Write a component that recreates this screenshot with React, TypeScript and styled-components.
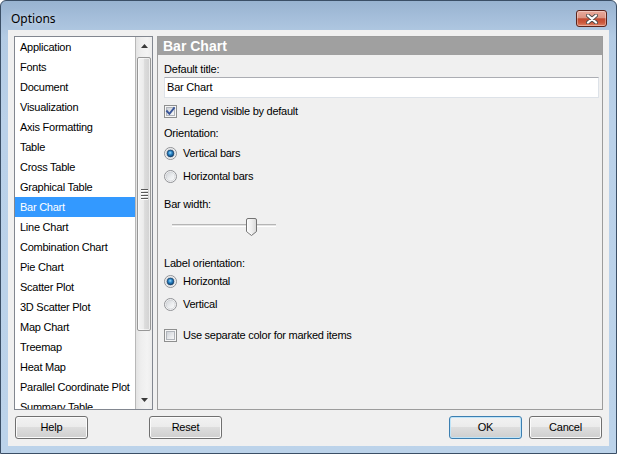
import React, { useId } from "react";
import styled, { createGlobalStyle } from "styled-components";

const Global = createGlobalStyle`
  html, body { margin: 0; padding: 0; width: 617px; height: 454px; overflow: hidden; background: #ffffff; }
  #root { width: 617px; height: 454px; }
  * { box-sizing: border-box; }
`;

const FONT = `"Liberation Sans", Arial, sans-serif`;

const Window = styled.div`
  width: 617px;
  height: 454px;
  border: 1px solid #3b4f66;
  border-radius: 6px 6px 0 0;
  background: linear-gradient(to bottom, #98b3d0 0px, #a6bfdb 18px, #b3cbe4 36px, #bad1e9 120px, #bcd3ea 100%);
  display: flex;
  flex-direction: column;
  padding: 0 7px 7px 7px;
  font-family: ${FONT};
`;

const TitleBar = styled.div`
  height: 29px;
  flex-shrink: 0;
  display: flex;
  align-items: flex-start;
  padding: 0 2px 0 3px;
`;

const TitleText = styled.div`
  margin-top: 10px;
  font-family: "Noto Sans", "Open Sans", sans-serif;
  font-size: 12px;
  line-height: 16px;
  color: #000;
  text-shadow: 0 0 6px rgba(255, 255, 255, 0.7);
  flex: 1;
`;

const CloseBtn = styled.div`
  width: 31px;
  height: 17px;
  margin-top: 9px;
  border: 1px solid #5c241b;
  border-radius: 3px;
  background: linear-gradient(to bottom, #eaaa9c 0%, #dc9482 45%, #c24a31 52%, #cc5a3d 78%, #e0856a 100%);
  box-shadow: inset 0 0 0 1px rgba(255, 255, 255, 0.35);
  display: flex;
  align-items: center;
  justify-content: center;
`;

const Client = styled.div`
  flex: 1;
  background: #f0f0f0;
  display: flex;
  flex-direction: column;
  padding: 6px 6px 7px 6px;
`;

const MainRow = styled.div`
  display: flex;
  gap: 4px;
  height: 374px;
`;

const ListBox = styled.div`
  width: 139px;
  border: 1px solid #828790;
  background: #fff;
  display: flex;
  overflow: hidden;
`;

const ItemsCol = styled.div`
  width: 120px;
  display: flex;
  flex-direction: column;
  overflow: hidden;
`;

const Item = styled.div<{ $selected?: boolean }>`
  height: 20px;
  flex-shrink: 0;
  padding-left: 5px;
  line-height: 20px;
  font-size: 11px;
  letter-spacing: -0.25px;
  white-space: nowrap;
  color: ${(p) => (p.$selected ? "#ffffff" : "#000000")};
  background: ${(p) => (p.$selected ? "#3399ff" : "transparent")};
`;

const ScrollBar = styled.div`
  width: 17px;
  border-left: 1px solid #b8b8b8;
  display: flex;
  flex-direction: column;
  background: linear-gradient(to right, #e3e3e3 0%, #eeeeee 30%, #f3f3f3 70%, #ececec 100%);
`;

const ArrowBtn = styled.div`
  height: 18px;
  flex-shrink: 0;
  display: flex;
  align-items: center;
  justify-content: center;
  padding-left: 1px;
`;

const Thumb = styled.div`
  margin: 2px 0 0 1px;
  width: 14px;
  height: 274px;
  flex-shrink: 0;
  border: 1px solid #979797;
  border-radius: 2px;
  background: linear-gradient(to right, #f4f4f4 0%, #ececec 45%, #dcdcdc 55%, #d2d2d2 100%);
  box-shadow: inset 0 0 0 1px rgba(255, 255, 255, 0.6);
  display: flex;
  align-items: center;
  justify-content: center;
`;

const Grip = styled.div`
  width: 7px;
  display: flex;
  flex-direction: column;
  gap: 1px;
`;

const GripLine = styled.div`
  height: 1px;
  background: #5a5a5a;
  box-shadow: 0 1px 0 #ffffff;
  margin-bottom: 1px;
`;

const TrackFill = styled.div`
  flex: 1;
`;

const Panel = styled.div`
  flex: 1;
  border: 1px solid #9c9c9c;
  display: flex;
  flex-direction: column;
`;

const PanelHeader = styled.div`
  height: 18px;
  background: #a0a0a0;
  color: #ffffff;
  font-weight: bold;
  font-size: 14px;
  line-height: 18px;
  padding-left: 5px;
`;

const PanelBody = styled.div`
  padding: 0 3px 0 6px;
  display: flex;
  flex-direction: column;
`;

const Label = styled.div<{ $mt: number }>`
  margin-top: ${(p) => p.$mt}px;
  height: 16px;
  line-height: 16px;
  font-size: 11px;
  letter-spacing: -0.2px;
  color: #000;
`;

const TextBox = styled.div`
  height: 21px;
  border: 1px solid #dde2e8;
  border-top-color: #abadb3;
  background: #fff;
  font-size: 11px;
  letter-spacing: -0.2px;
  line-height: 19px;
  padding-left: 2px;
  color: #000;
`;

const OptionRow = styled.div<{ $mt: number }>`
  margin-top: ${(p) => p.$mt}px;
  height: 16px;
  display: flex;
  align-items: center;
  gap: 6px;
  font-size: 11px;
  letter-spacing: -0.25px;
  color: #000;
`;

const CheckBoxBox = styled.span`
  width: 13px;
  height: 13px;
  flex-shrink: 0;
  position: relative;
  border: 1px solid #8e8f8f;
  background: #f6f6f6;
  &::before {
    content: "";
    position: absolute;
    inset: 1px;
    border: 1px solid #b0b4ba;
    background: linear-gradient(135deg, #cdd1d7 0%, #e4e6e9 50%, #f7f7f7 100%);
  }
`;

const CheckMark = styled.svg`
  position: absolute;
  left: 0;
  top: 0;
`;

const RadioSvg = styled.svg`
  flex-shrink: 0;
`;

const SliderBox = styled.div`
  height: 30px;
  width: 112px;
  padding: 12px 0 0 8px;
`;

const SliderTrack = styled.div`
  position: relative;
  width: 104px;
  height: 3px;
  border-top: 1px solid #b5b5b5;
  border-bottom: 1px solid #ffffff;
  background: #e4e4e4;
`;

const SliderThumb = styled.svg`
  position: absolute;
  top: -7px;
`;

const ButtonRow = styled.div`
  display: flex;
  margin-top: 6px;
  height: 23px;
  padding: 0 1px;
`;

const Spacer = styled.div`
  flex: 1;
`;

const Button = styled.button<{ $default?: boolean; $ml?: number }>`
  width: 73px;
  height: 23px;
  margin-left: ${(p) => p.$ml ?? 0}px;
  padding: 0 0 2px 0;
  font-family: ${FONT};
  font-size: 11px;
  letter-spacing: -0.2px;
  color: #000;
  border: 1px solid ${(p) => (p.$default ? "#3c7fb1" : "#707070")};
  border-radius: 3px;
  background: linear-gradient(to bottom, #f2f2f2 0%, #ebebeb 50%, #dddddd 50%, #cfcfcf 100%);
  box-shadow: inset 0 0 0 1px ${(p) => (p.$default ? "#bfe4f8" : "#fbfbfb")};
`;

const items = [
  "Application",
  "Fonts",
  "Document",
  "Visualization",
  "Axis Formatting",
  "Table",
  "Cross Table",
  "Graphical Table",
  "Bar Chart",
  "Line Chart",
  "Combination Chart",
  "Pie Chart",
  "Scatter Plot",
  "3D Scatter Plot",
  "Map Chart",
  "Treemap",
  "Heat Map",
  "Parallel Coordinate Plot",
  "Summary Table",
];

function CheckBox({ checked, label, mt }: { checked?: boolean; label: string; mt: number }) {
  return (
    <OptionRow $mt={mt}>
      <CheckBoxBox>
        {checked && (
          <CheckMark width="11" height="11" viewBox="0 0 11 11">
            <path d="M2 5.2 L4.4 7.8 L9 2.2" fill="none" stroke="#3a5699" strokeWidth="1.9" strokeLinecap="square" />
          </CheckMark>
        )}
      </CheckBoxBox>
      <span>{label}</span>
    </OptionRow>
  );
}

function Radio({ checked, label, mt }: { checked?: boolean; label: string; mt: number }) {
  const id = useId().replace(/:/g, "");
  return (
    <OptionRow $mt={mt}>
      <RadioSvg width="13" height="13" viewBox="0 0 13 13">
        <defs>
          <linearGradient id={`bg${id}`} x1="0" y1="0" x2="1" y2="1">
            <stop offset="0" stopColor="#cfd2d6" />
            <stop offset="0.55" stopColor="#eceef0" />
            <stop offset="1" stopColor="#fbfbfb" />
          </linearGradient>
          <radialGradient id={`dot${id}`} cx="0.45" cy="0.4" r="0.6">
            <stop offset="0" stopColor="#9fdcff" />
            <stop offset="0.45" stopColor="#2a86c8" />
            <stop offset="1" stopColor="#0c3f70" />
          </radialGradient>
        </defs>
        <circle cx="6.5" cy="6.5" r="6" fill="#f8f8f8" stroke="#8f9195" strokeWidth="1" />
        <circle cx="6.5" cy="6.5" r="4.5" fill={`url(#bg${id})`} stroke="#c5c8cc" strokeWidth="0.6" />
        {checked && <circle cx="6.5" cy="6.5" r="3.4" fill={`url(#dot${id})`} stroke="#183f66" strokeWidth="0.7" />}
      </RadioSvg>
      <span>{label}</span>
    </OptionRow>
  );
}

function Slider({ value, max }: { value: number; max: number }) {
  const id = useId().replace(/:/g, "");
  const left = Math.round((value / max) * 93);
  return (
    <SliderBox>
      <SliderTrack>
        <SliderThumb width="11" height="18" viewBox="0 0 11 18" style={{ left: `${left}px` }}>
          <defs>
            <linearGradient id={`th${id}`} x1="0" y1="0" x2="1" y2="0">
              <stop offset="0" stopColor="#fbfbfb" />
              <stop offset="0.5" stopColor="#efefef" />
              <stop offset="1" stopColor="#d8d8d8" />
            </linearGradient>
          </defs>
          <path
            d="M0.5 2 Q0.5 0.5 2 0.5 H9 Q10.5 0.5 10.5 2 V13.5 L5.5 17.5 L0.5 13.5 Z"
            fill={`url(#th${id})`}
            stroke="#737373"
            strokeWidth="1"
          />
          <path d="M1.5 2 V13 L5.5 16.3" fill="none" stroke="#ffffff" strokeWidth="0.8" opacity="0.9" />
        </SliderThumb>
      </SliderTrack>
    </SliderBox>
  );
}

export default function App() {
  return (
    <>
      <Global />
      <Window>
        <TitleBar>
          <TitleText>Options</TitleText>
          <CloseBtn>
            <svg width="12" height="10" viewBox="0 0 12 10">
              <path d="M2 1.5 L10 8.5 M10 1.5 L2 8.5" stroke="#4a4a4a" strokeWidth="4" strokeLinecap="round" />
              <path d="M2 1.5 L10 8.5 M10 1.5 L2 8.5" stroke="#ffffff" strokeWidth="2.3" strokeLinecap="round" />
            </svg>
          </CloseBtn>
        </TitleBar>
        <Client>
          <MainRow>
            <ListBox>
              <ItemsCol>
                {items.map((it) => (
                  <Item key={it} $selected={it === "Bar Chart"}>
                    {it}
                  </Item>
                ))}
              </ItemsCol>
              <ScrollBar>
                <ArrowBtn>
                  <svg width="7" height="4" viewBox="0 0 7 4">
                    <path d="M3.5 0 L7 4 L0 4 Z" fill="#3a3a3a" />
                  </svg>
                </ArrowBtn>
                <Thumb>
                  <Grip>
                    <GripLine />
                    <GripLine />
                    <GripLine />
                    <GripLine />
                  </Grip>
                </Thumb>
                <TrackFill />
                <ArrowBtn>
                  <svg width="7" height="4" viewBox="0 0 7 4">
                    <path d="M0 0 L7 0 L3.5 4 Z" fill="#3a3a3a" />
                  </svg>
                </ArrowBtn>
              </ScrollBar>
            </ListBox>
            <Panel>
              <PanelHeader>Bar Chart</PanelHeader>
              <PanelBody>
                <Label $mt={6}>Default title:</Label>
                <TextBox>Bar Chart</TextBox>
                <CheckBox checked label="Legend visible by default" mt={5} />
                <Label $mt={6}>Orientation:</Label>
                <Radio checked label="Vertical bars" mt={4} />
                <Radio label="Horizontal bars" mt={7} />
                <Label $mt={12}>Bar width:</Label>
                <Slider value={8} max={10} />
                <Label $mt={13}>Label orientation:</Label>
                <Radio checked label="Horizontal" mt={2} />
                <Radio label="Vertical" mt={7} />
                <CheckBox label="Use separate color for marked items" mt={15} />
              </PanelBody>
            </Panel>
          </MainRow>
          <ButtonRow>
            <Button>Help</Button>
            <Button $ml={61}>Reset</Button>
            <Spacer />
            <Button $default>OK</Button>
            <Button $ml={7}>Cancel</Button>
          </ButtonRow>
        </Client>
      </Window>
    </>
  );
}
